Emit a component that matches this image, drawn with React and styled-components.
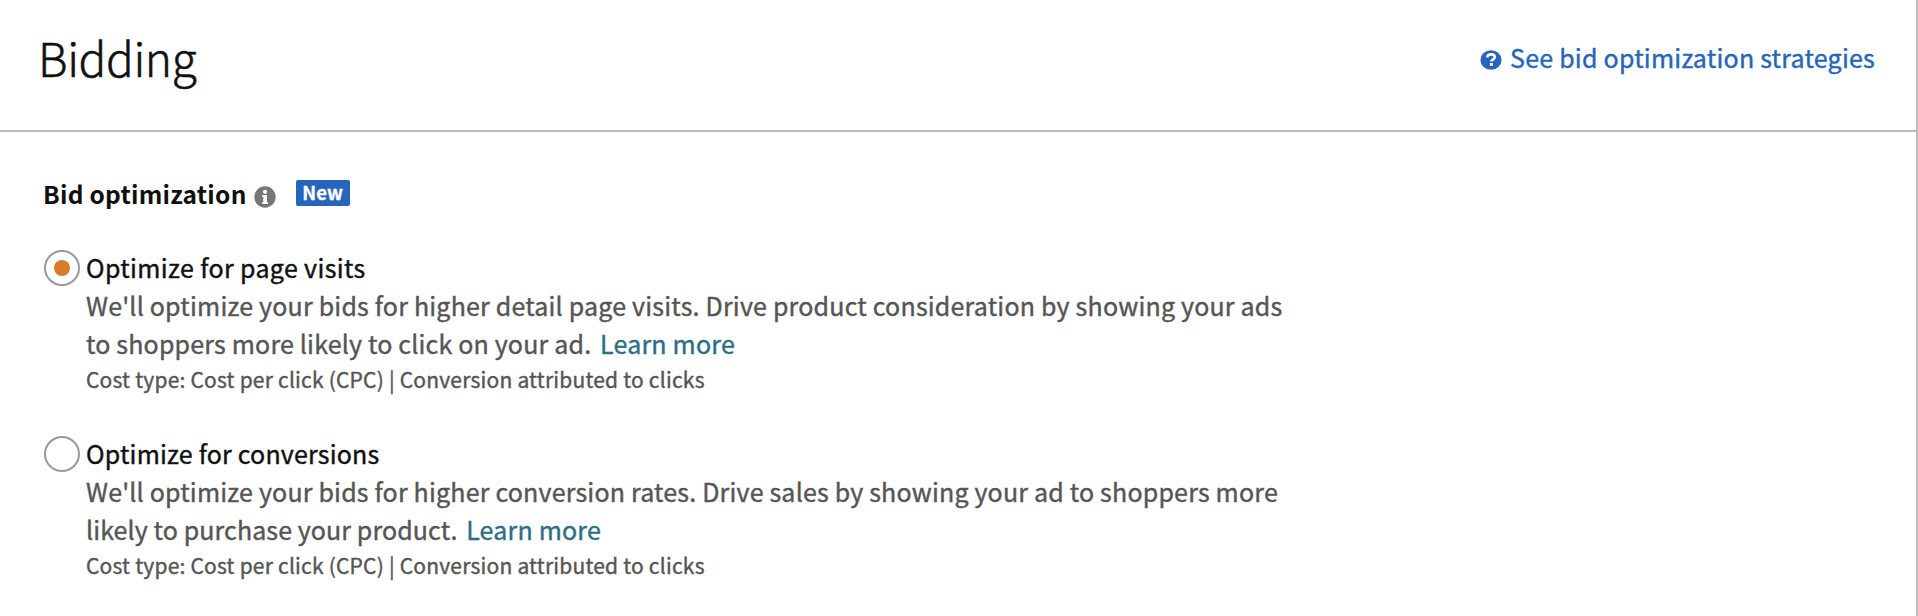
import React from 'react';
import styled, { createGlobalStyle } from 'styled-components';

const Global = createGlobalStyle`
  * { box-sizing: border-box; }
  body {
    margin: 0;
    background: #fff;
    color: #0f1111;
    font-family: "Noto Sans CJK SC", "Noto Sans", sans-serif;
    font-size: 25px;
  }
`;
const Panel = styled.section`
  height: 616px;
  border-right: 2px solid #bbb;
  overflow: hidden;
`;
const Header = styled.header`
  display: flex;
  justify-content: space-between;
  align-items: center;
  height: 132px;
  padding: 0 41px 18px 38px;
  border-bottom: 2px solid #bbb;
`;
const Title = styled.h1`
  margin: 0;
  padding-top: 1px;
  font-size: 46px;
  font-weight: 300;
  line-height: 60px;
  letter-spacing: -0.4px;
  -webkit-text-stroke: 0.5px;
`;
const HelpLink = styled.a`
  display: flex;
  align-items: center;
  gap: 8px;
  padding-top: 2px;
  color: #2665bb;
  line-height: 38px;
  letter-spacing: 0.23px;
  -webkit-text-stroke: 0.4px;
  svg { width: 22px; height: 20px; margin-top: 5px; }
`;
const Body = styled.div`
  padding: 42px 44px 0 43px;
`;
const Legend = styled.div`
  display: flex;
  align-items: center;
  height: 38px;
  svg { width: 22px; height: 22px; margin: 7px 20px 0 7px; }
`;
const LegendText = styled.span`
  font-size: 24.5px;
  font-weight: 700;
  letter-spacing: 0.25px;
`;
const Badge = styled.span`
  width: 54px;
  height: 26px;
  border-radius: 2px;
  background: #2665bb;
  color: #fff;
  font-size: 18.5px;
  font-weight: 700;
  line-height: 25px;
  text-align: center;
  -webkit-text-stroke: 0.3px;
`;
const Options = styled.div`
  display: flex;
  flex-direction: column;
  gap: 38px;
  padding: 36px 0 0 1px;
`;
const Option = styled.label`
  display: flex;
  gap: 6px;
  -webkit-text-stroke: 0.4px;
`;
const Radio = styled.span`
  display: grid;
  place-items: center;
  flex: none;
  width: 36px;
  height: 36px;
  margin-top: 2px;
  border: 2px solid #999;
  border-radius: 50%;
  &::after {
    content: "";
    width: 16px;
    height: 16px;
    border-radius: 50%;
    background: ${p => (p.$checked ? '#d87b2b' : 'transparent')};
  }
`;
const Copy = styled.div`
  white-space: nowrap;
  line-height: 38px;
`;
const Name = styled.div`
  letter-spacing: ${p => p.$tracking}px;
`;
const Line = styled.div`
  color: #555;
  letter-spacing: ${p => p.$tracking}px;
`;
const More = styled.a`
  margin-left: 3px;
  color: #2b6f86;
  letter-spacing: 0.2px;
`;
const Cost = styled.div`
  color: #555;
  font-size: 21px;
  line-height: 34px;
  letter-spacing: 0.21px;
`;

const HelpIcon = () => (
  <svg viewBox="0 0 22 20" stroke="none">
    <ellipse cx="11" cy="10" rx="10.6" ry="9.8" fill="#2665bb" />
    <path d="M7.200 7.400C7.500 5.200 9 4.400 11 4.400c2.300 0 3.800 1 3.800 2.700 0 2.300-3.200 2.200-3.400 4.400" fill="none" stroke="#fff" strokeWidth="2.600" />
    <rect x="9.900" y="13" width="3" height="2.800" fill="#fff" />
  </svg>
);
const InfoIcon = () => (
  <svg viewBox="0 0 22 22">
    <circle cx="11" cy="11" r="10.700" fill="#767676" />
    <circle cx="11" cy="5.800" r="2.100" fill="#fff" />
    <path d="M8.300 9h4.700v7h1v2H8.300v-2h1v-5h-1z" fill="#fff" />
  </svg>
);

const options = [
  {
    name: 'Optimize for page visits',
    nameTracking: 0.36,
    lines: [
      { text: "We'll optimize your bids for higher detail page visits. Drive product consideration by showing your ads", tracking: 0.2 },
      { text: 'to shoppers more likely to click on your ad. ', tracking: 0.18 },
    ],
    checked: true,
  },
  {
    name: 'Optimize for conversions',
    nameTracking: 0.19,
    lines: [
      { text: "We'll optimize your bids for higher conversion rates. Drive sales by showing your ad to shoppers more", tracking: 0.19 },
      { text: 'likely to purchase your product. ', tracking: 0.1 },
    ],
    checked: false,
  },
];

export default function App() {
  return (
    <Panel>
      <Global />
      <Header>
        <Title>Bidding</Title>
        <HelpLink><HelpIcon />See bid optimization strategies</HelpLink>
      </Header>
      <Body>
        <Legend>
          <LegendText>Bid optimization</LegendText>
          <InfoIcon />
          <Badge>New</Badge>
        </Legend>
        <Options>
          {options.map(({ name, nameTracking, lines: [first, second], checked }) => (
            <Option key={name}>
              <Radio $checked={checked} />
              <Copy>
                <Name $tracking={nameTracking}>{name}</Name>
                <Line $tracking={first.tracking}>{first.text}</Line>
                <Line $tracking={second.tracking}>{second.text}<More>Learn more</More></Line>
                <Cost>Cost type: Cost per click (CPC) | Conversion attributed to clicks</Cost>
              </Copy>
            </Option>
          ))}
        </Options>
      </Body>
    </Panel>
  );
}
